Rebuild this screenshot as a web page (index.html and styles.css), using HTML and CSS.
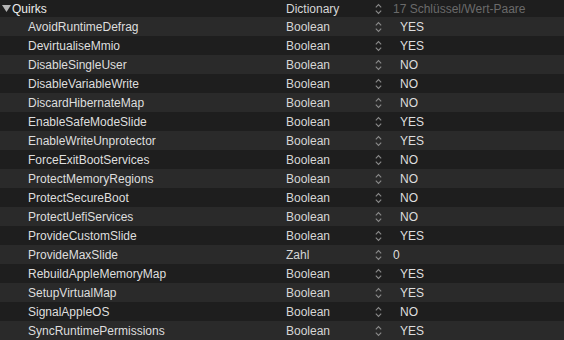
FILE: index.html
```html
<!DOCTYPE html>
<html lang="de">
<head>
    <meta charset="UTF-8">
    <title>Quirks</title>
    <link rel="stylesheet" href="styles.css">
</head>
<body>
    <div class="plist">
        <div class="row head">
            <div class="key"><svg class="disclosure" width="9" height="7" viewBox="0 0 9 7"><polygon points="0,0 9,0 4.5,7" fill="#b4b4b4"/></svg>Quirks</div>
            <div class="type">Dictionary</div>
            <div class="value"><span class="stepper"></span><span class="count">17 Schlüssel/Wert-Paare</span></div>
        </div>
        <div id="rows"></div>
    </div>
    <script>
        const quirks = [
            ["AvoidRuntimeDefrag", "Boolean", "YES"],
            ["DevirtualiseMmio", "Boolean", "YES"],
            ["DisableSingleUser", "Boolean", "NO"],
            ["DisableVariableWrite", "Boolean", "NO"],
            ["DiscardHibernateMap", "Boolean", "NO"],
            ["EnableSafeModeSlide", "Boolean", "YES"],
            ["EnableWriteUnprotector", "Boolean", "YES"],
            ["ForceExitBootServices", "Boolean", "NO"],
            ["ProtectMemoryRegions", "Boolean", "NO"],
            ["ProtectSecureBoot", "Boolean", "NO"],
            ["ProtectUefiServices", "Boolean", "NO"],
            ["ProvideCustomSlide", "Boolean", "YES"],
            ["ProvideMaxSlide", "Zahl", "0"],
            ["RebuildAppleMemoryMap", "Boolean", "YES"],
            ["SetupVirtualMap", "Boolean", "YES"],
            ["SignalAppleOS", "Boolean", "NO"],
            ["SyncRuntimePermissions", "Boolean", "YES"]
        ];

        // kleine Auf/Ab-Pfeile vor jedem Wert
        const stepperSvg = '<svg width="7" height="12" viewBox="0 0 7 12"><path d="M0.8 4.3 L3.5 1.5 L6.2 4.3 M0.8 7.7 L3.5 10.5 L6.2 7.7" fill="none" stroke="#8a8a8a" stroke-width="1.1"/></svg>';

        document.querySelector(".head .stepper").innerHTML = stepperSvg;

        const container = document.getElementById("rows");
        quirks.forEach(([key, type, value]) => {
            const row = document.createElement("div");
            row.className = "row";
            const valueClass = type === "Boolean" ? "val bool" : "val num";
            row.innerHTML =
                `<div class="key child">${key}</div>` +
                `<div class="type">${type}</div>` +
                `<div class="value"><span class="stepper">${stepperSvg}</span><span class="${valueClass}">${value}</span></div>`;
            container.appendChild(row);
        });
    </script>
</body>
</html>
```

FILE: styles.css
```css
body {
    margin: 0;
    background-color: #1e1e1e;
    font-family: "Liberation Sans", Arial, sans-serif;
    font-size: 12px;
    color: #dedede;
    overflow: hidden;
}
.plist {
    width: 564px;
}
.row {
    display: flex;
    align-items: center;
    height: 19px;
}
.row.head {
    height: 17px;
    color: #ececec;
}
#rows .row:nth-child(odd) {
    background-color: #2a2a2a;
}
.key {
    display: flex;
    align-items: center;
    width: 286px;
    white-space: nowrap;
}
.key.child {
    padding-left: 28px;
    width: 258px;
}
.disclosure {
    margin-left: 2px;
    margin-right: 1px;
}
.type {
    width: 89px;
    color: #d6d6d6;
}
.value {
    display: flex;
    align-items: center;
}
.stepper {
    display: flex;
    width: 7px;
    margin-right: 11px;
}
.count {
    color: #6a6a6a;
}
.val.bool {
    padding-left: 7px;
}
```
